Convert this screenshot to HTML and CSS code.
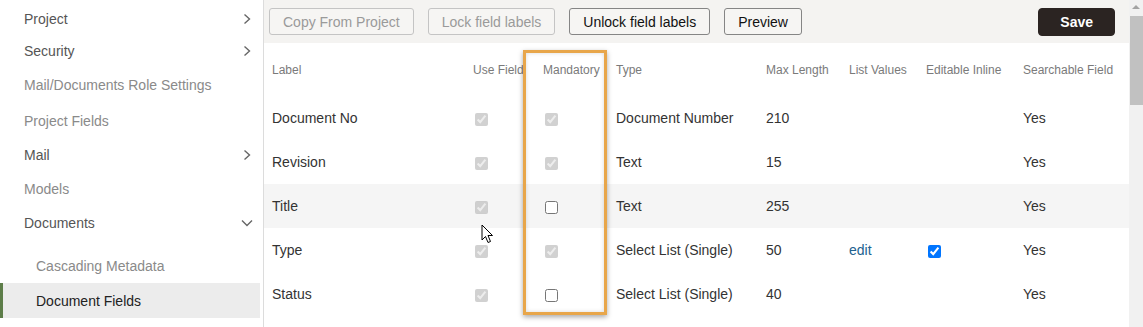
FILE: index.html
```html
<!DOCTYPE html>
<html>
<head>
    <title>Document Fields</title>
    <link rel="stylesheet" href="styles.css">
</head>
<body>
    <div class="page">
        <div class="sidebar">
            <div class="nav-item parent">Project
                <svg class="chevron" width="8" height="12" viewBox="0 0 8 12"><polyline points="1.5,1.5 6.5,6 1.5,10.5"/></svg>
            </div>
            <div class="nav-item parent">Security
                <svg class="chevron" width="8" height="12" viewBox="0 0 8 12"><polyline points="1.5,1.5 6.5,6 1.5,10.5"/></svg>
            </div>
            <div class="nav-item">Mail/Documents Role Settings</div>
            <div class="nav-item">Project Fields</div>
            <div class="nav-item parent">Mail
                <svg class="chevron" width="8" height="12" viewBox="0 0 8 12"><polyline points="1.5,1.5 6.5,6 1.5,10.5"/></svg>
            </div>
            <div class="nav-item">Models</div>
            <div class="nav-item parent">Documents
                <svg class="chevron-down" width="12" height="8" viewBox="0 0 12 8"><polyline points="1,1.5 6,6.5 11,1.5"/></svg>
            </div>
            <div class="sub-menu">
                <div class="nav-item sub">Cascading Metadata</div>
                <div class="nav-item sub active">Document Fields</div>
            </div>
        </div>

        <div class="main">
            <div class="toolbar">
                <button class="btn" disabled>Copy From Project</button>
                <button class="btn" disabled>Lock field labels</button>
                <button class="btn">Unlock field labels</button>
                <button class="btn">Preview</button>
                <button class="btn btn-save">Save</button>
            </div>

            <table class="fields-table">
                <colgroup>
                    <col style="width: 201px">
                    <col style="width: 70px">
                    <col style="width: 73px">
                    <col style="width: 150px">
                    <col style="width: 83px">
                    <col style="width: 77px">
                    <col style="width: 97px">
                    <col>
                </colgroup>
                <thead>
                    <tr>
                        <th>Label</th>
                        <th>Use Field</th>
                        <th>Mandatory</th>
                        <th>Type</th>
                        <th>Max Length</th>
                        <th>List Values</th>
                        <th>Editable Inline</th>
                        <th>Searchable Field</th>
                    </tr>
                </thead>
                <tbody>
                    <tr>
                        <td>Document No</td>
                        <td class="check-cell"><input type="checkbox" checked disabled></td>
                        <td class="check-cell"><input type="checkbox" checked disabled></td>
                        <td>Document Number</td>
                        <td>210</td>
                        <td></td>
                        <td></td>
                        <td>Yes</td>
                    </tr>
                    <tr>
                        <td>Revision</td>
                        <td class="check-cell"><input type="checkbox" checked disabled></td>
                        <td class="check-cell"><input type="checkbox" checked disabled></td>
                        <td>Text</td>
                        <td>15</td>
                        <td></td>
                        <td></td>
                        <td>Yes</td>
                    </tr>
                    <tr class="hover">
                        <td>Title</td>
                        <td class="check-cell"><input type="checkbox" checked disabled></td>
                        <td class="check-cell"><input type="checkbox"></td>
                        <td>Text</td>
                        <td>255</td>
                        <td></td>
                        <td></td>
                        <td>Yes</td>
                    </tr>
                    <tr>
                        <td>Type</td>
                        <td class="check-cell"><input type="checkbox" checked disabled></td>
                        <td class="check-cell"><input type="checkbox" checked disabled></td>
                        <td>Select List (Single)</td>
                        <td>50</td>
                        <td><a class="edit-link" href="#">edit</a></td>
                        <td class="check-cell"><input type="checkbox" checked></td>
                        <td>Yes</td>
                    </tr>
                    <tr>
                        <td>Status</td>
                        <td class="check-cell"><input type="checkbox" checked disabled></td>
                        <td class="check-cell"><input type="checkbox"></td>
                        <td>Select List (Single)</td>
                        <td>40</td>
                        <td></td>
                        <td></td>
                        <td>Yes</td>
                    </tr>
                </tbody>
            </table>
        </div>

        <div class="scrollbar">
            <div class="scroll-arrow"></div>
            <div class="scroll-thumb"></div>
        </div>
    </div>

    <!-- annotation + mouse pointer drawn over the screenshot -->
    <div class="highlight-box"></div>
    <svg class="cursor" width="13" height="20" viewBox="0 0 13 20">
        <path d="M1 1 L1 16 L4.5 12.5 L7 18.5 L9.5 17.5 L7 11.5 L11.5 11.5 Z" fill="#fff" stroke="#000" stroke-width="1"/>
    </svg>
</body>
</html>
```

FILE: styles.css
```css
body {
    margin: 0;
    font-family: "Liberation Sans", Arial, sans-serif;
    font-size: 14px;
    color: #333333;
    background-color: #ffffff;
    overflow: hidden;
}

.page {
    display: flex;
    height: 327px;
}

/* menu de gauche */
.sidebar {
    width: 263px;
    flex-shrink: 0;
    border-right: 1px solid #dcdcdc;
    padding-top: 3px;
    box-sizing: content-box;
}

.nav-item {
    display: flex;
    align-items: center;
    justify-content: space-between;
    height: 36px;
    padding: 0 11px 0 24px;
    color: #8a8a8a;
}

.nav-item.parent {
    height: 32px;
    color: #555555;
}

.chevron,
.chevron-down {
    fill: none;
    stroke: #666666;
    stroke-width: 1.4;
}

.chevron {
    margin-right: 1px;
}

.chevron-down {
    margin-right: -1px;
}

.sub-menu {
    padding-top: 9px;
}

.nav-item.sub {
    height: 35px;
    padding-left: 36px;
}

.nav-item.active {
    color: #222222;
    background-color: #ececec;
    border-left: 3px solid #5d7d49;
    padding-left: 33px;
    margin-right: 3px;
}

/* zone principale */
.main {
    flex: 1;
    min-width: 0;
}

.toolbar {
    display: flex;
    align-items: center;
    height: 43px;
    padding: 0 14px 0 5px;
    background-color: #f4f3f1;
    box-sizing: border-box;
}

.btn {
    font-family: "Liberation Sans", Arial, sans-serif;
    font-size: 14px;
    height: 27px;
    padding: 0 13px;
    margin-right: 14px;
    background-color: #f6f5f3;
    color: #111111;
    border: 1px solid #858585;
    border-radius: 3px;
}

.btn:disabled {
    color: #9a9a9a;
    border-color: #c4c4c4;
}

.btn-save {
    margin-left: auto;
    margin-right: 0;
    height: 28px;
    padding: 0 21px;
    font-weight: bold;
    color: #ffffff;
    background-color: #2b2422;
    border-color: #2b2422;
    border-radius: 4px;
}

.fields-table {
    width: 100%;
    table-layout: fixed;
    border-collapse: collapse;
}

.fields-table th {
    height: 53px;
    padding: 0 8px;
    text-align: left;
    font-weight: normal;
    font-size: 12px;
    color: #7a7a7a;
    white-space: nowrap;
}

.fields-table td {
    height: 44px;
    padding: 0 8px;
    white-space: nowrap;
}

.fields-table tr.hover td {
    background-color: #f5f5f5;
}

.fields-table td.check-cell {
    padding-left: 10px;
}

.check-cell input {
    margin: 0;
    width: 13px;
    height: 13px;
    vertical-align: middle;
}

.edit-link {
    color: #22628f;
    text-decoration: none;
}

/* barre de défilement */
.scrollbar {
    width: 14px;
    flex-shrink: 0;
    background-color: #f1f1f1;
    position: relative;
}

.scroll-arrow {
    width: 0;
    height: 0;
    margin: 5px auto 0;
    border-left: 4px solid transparent;
    border-right: 4px solid transparent;
    border-bottom: 4px solid #a3a3a3;
}

.scroll-thumb {
    margin: 7px 0 0 1px;
    height: 89px;
    background-color: #c1c1c1;
}

.highlight-box {
    position: absolute;
    left: 523px;
    top: 50px;
    width: 78px;
    height: 259px;
    border: 3px solid #e8a64a;
    box-shadow: 0 2px 5px rgba(0, 0, 0, 0.35), inset 0 0 4px rgba(0, 0, 0, 0.15);
    pointer-events: none;
}

.cursor {
    position: absolute;
    left: 481px;
    top: 224px;
}
```
